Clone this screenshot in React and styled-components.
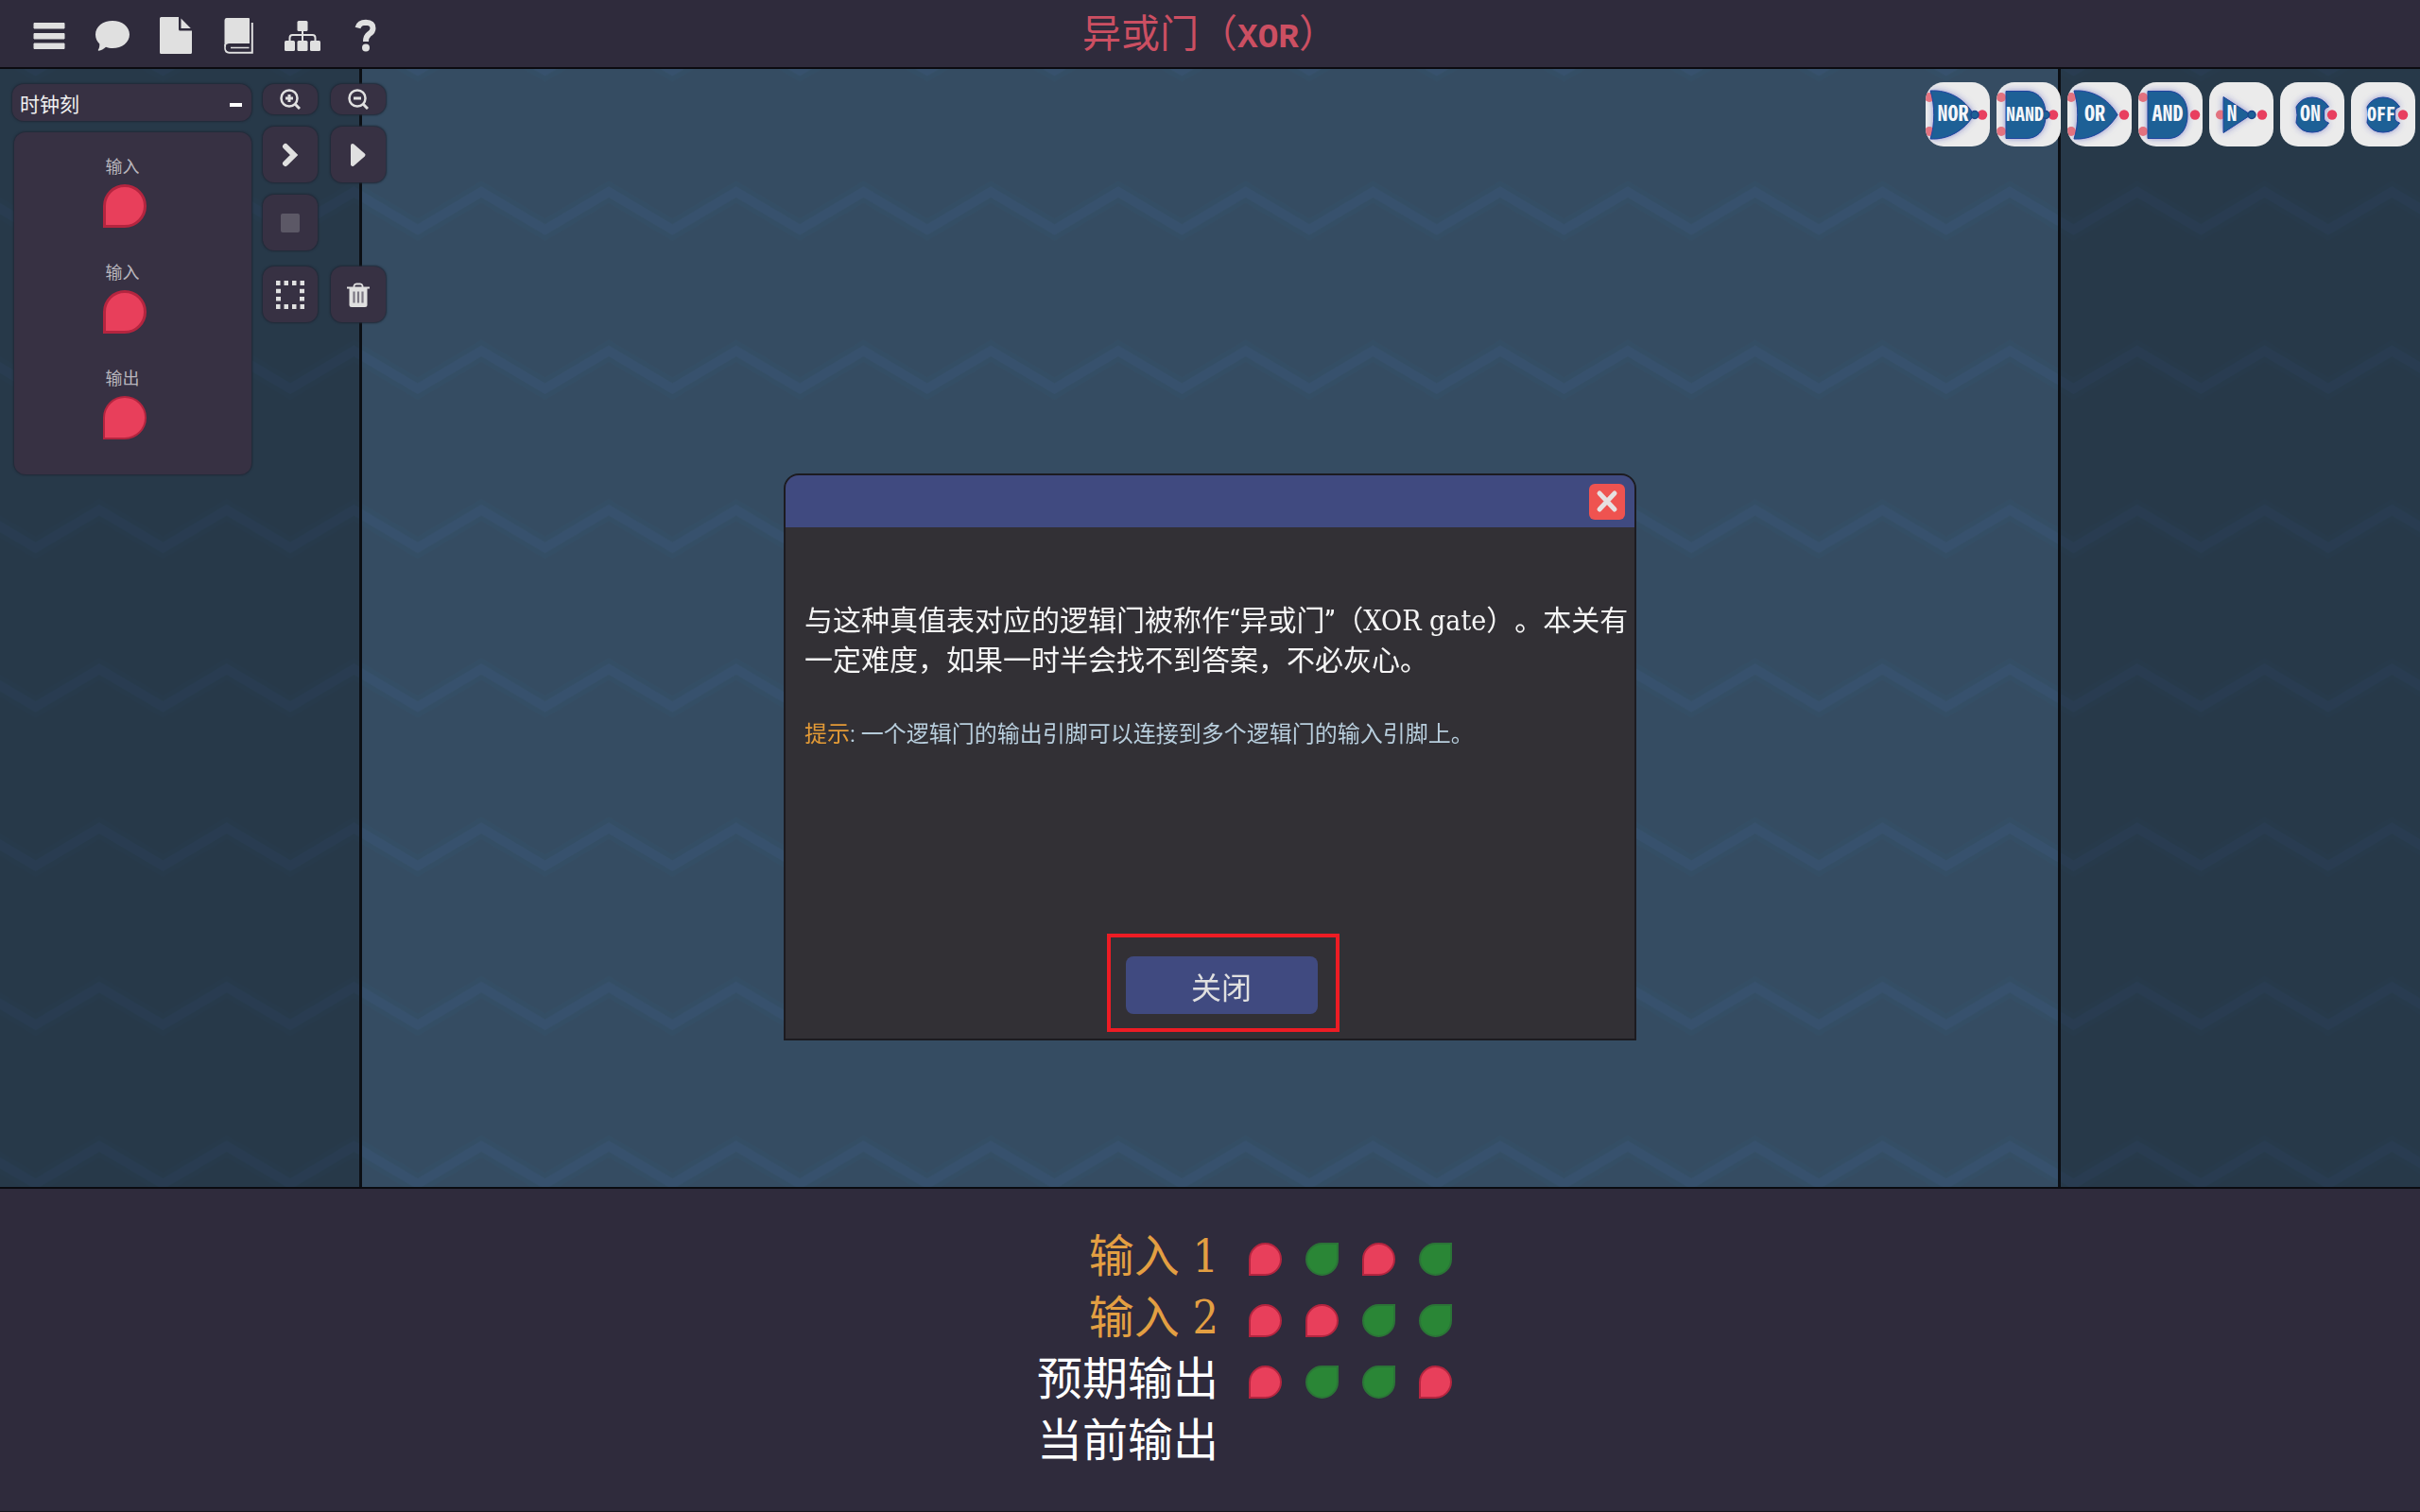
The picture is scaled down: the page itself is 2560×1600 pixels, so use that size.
import React, { useState } from 'react';
import styled, { createGlobalStyle } from 'styled-components';

const serif = `'Roboto Slab', 'DejaVu Serif Condensed', 'Noto Sans CJK SC', sans-serif`;
const sans = `'Noto Sans CJK SC', sans-serif`;

const GlobalStyle = createGlobalStyle`
  * {
    box-sizing: border-box;
  }
  body {
    margin: 0;
    background: #2f2b3c;
    font-family: ${sans};
    text-spacing-trim: space-all;
  }
  button {
    font-family: inherit;
    border: 0;
    padding: 0;
    cursor: pointer;
  }
`;

const Page = styled.div`
  display: flex;
  flex-direction: column;
  min-height: 100vh;
  border-bottom: 1px solid #17151e;
`;

const Header = styled.header`
  display: grid;
  grid-template-columns: 1fr auto 1fr;
  align-items: center;
  height: 73px;
  border-bottom: 2px solid #0b0b10;
`;

const Menu = styled.nav`
  display: flex;
  padding-left: 18px;
`;

const MenuButton = styled.button`
  display: flex;
  align-items: center;
  justify-content: center;
  width: 67px;
  height: 71px;
  padding-top: 2px;
  background: none;
  color: #e0e0e0;
`;

const Title = styled.h1`
  margin: 0;
  font-size: 41px;
  line-height: 64px;
  font-weight: 400;
  color: #cc4f62;
`;

const TitleCode = styled.b`
  font-family: 'Liberation Mono', monospace;
  font-size: 36px;
`;

const Board = styled.main`
  position: relative;
  display: flex;
  flex: 1;
  align-items: flex-start;
  justify-content: space-between;
  padding: 14px 5px 0 13px;
  background: #354c62;
`;

const Backdrop = styled.div`
  position: absolute;
  inset: 0;
  display: grid;
  grid-template-columns: 383px 1fr 383px;
  overflow: hidden;

  svg {
    position: absolute;
    inset: 0;
  }
`;

const Lane = styled.div`
  position: relative;
  background: ${p => (p.$shade ? 'rgba(0, 0, 0, 0.25)' : 'none')};
  border: 0 solid #0c0f14;
  border-left-width: ${p => (p.$edge === 'left' ? '3px' : '0')};
  border-right-width: ${p => (p.$edge === 'right' ? '3px' : '0')};
`;

const Tools = styled.div`
  position: relative;
  display: flex;
  align-items: flex-start;
  gap: 12px;
  padding-top: 2px;
`;

const PinColumn = styled.section`
  display: flex;
  flex-direction: column;
  gap: 12px;
  width: 253px;
`;

const box = `
  background: #373143;
  border-radius: 12px;
  box-shadow: 0 0 2px 1px #202836;
`;

const FoldButton = styled.button`
  ${box}
  display: flex;
  align-items: center;
  justify-content: space-between;
  height: 39px;
  padding: 0 10px 0 8px;
  font-size: 21px;
  color: #f0f0f0;

  &::after {
    content: '';
    width: 13px;
    height: 4px;
    margin-top: 4px;
    background: #fff;
  }
`;

const PinList = styled.ul`
  ${box}
  display: flex;
  flex-direction: column;
  align-items: center;
  gap: 32px;
  height: 362px;
  margin: 0 0 0 2px;
  padding: 21px 0 0;
  list-style: none;
`;

const PinItem = styled.li`
  display: flex;
  flex-direction: column;
  align-items: center;
  gap: 6px;
  width: 252px;
  padding-right: 22px;
  font-size: 18px;
  line-height: 28px;
  color: #b9b6bd;
`;

const Pin = styled.span`
  display: block;
  width: ${p => (p.$large ? '46px' : '35px')};
  height: ${p => (p.$large ? '46px' : '35px')};
  margin-left: ${p => (p.$large ? '4px' : '0')};
  background: ${p => (p.$on ? '#2a8636' : '#e83f5b')};
  border: ${p => (p.$outlined ? '3px' : '2px')} solid
    ${p => (p.$on ? '#2b7437' : '#b4253f')};
  border-radius: ${p => (p.$on ? '50% 0 50% 50%' : '50% 50% 50% 0')};
`;

const ToolGrid = styled.div`
  display: grid;
  grid-template-columns: 58px 58px;
  gap: 13px 14px;
`;

const ToolButton = styled.button`
  ${box}
  display: flex;
  align-items: center;
  justify-content: center;
  width: 58px;
  height: ${p => (p.$slim ? '32px' : '59px')};
  color: #e0e0e0;
`;

const EditRow = styled.div`
  display: grid;
  grid-column: 1 / -1;
  grid-template-columns: subgrid;
  padding-top: 4px;
`;

const GateBar = styled.div`
  position: relative;
  display: flex;
  gap: 7px;
`;

const GateButton = styled.button`
  width: 68px;
  height: 68px;
  background: #ebebeb;
  border-radius: 19px;
  overflow: hidden;

  svg {
    display: block;
  }
`;

const GateText = styled.text`
  font-family: 'Noto Sans Mono CJK SC', 'Liberation Sans Narrow', sans-serif;
  font-weight: 700;
  fill: #f4f6fa;
  text-anchor: middle;
`;

const Dialog = styled.section`
  position: fixed;
  top: 50%;
  left: 50%;
  transform: translate(-50%, -50%);
  display: flex;
  flex-direction: column;
  width: 902px;
  height: 600px;
  margin-top: 1px;
  background: #323035;
  border: 2px solid #1c1b20;
  border-radius: 16px 16px 0 0;
  overflow: hidden;
`;

const DialogHeader = styled.header`
  display: flex;
  align-items: center;
  justify-content: flex-end;
  height: 55px;
  padding-right: 10px;
  background: #404a80;
`;

const CloseIcon = styled.button`
  display: flex;
  align-items: center;
  justify-content: center;
  width: 38px;
  height: 38px;
  background: #ef5350;
  border-radius: 6px;
`;

const DialogBody = styled.div`
  flex: 1;
  padding: 78px 0 0 20px;
  font-family: Roboto, ${sans};
  white-space: nowrap;
`;

const Lead = styled.p`
  margin: 0;
  font-size: 30px;
  line-height: 42px;
  color: #f5f5f5;
`;

const Term = styled.span`
  font-family: ${serif};
`;

const Hint = styled.p`
  margin: 36px 0 0;
  font-size: 24px;
  line-height: 42px;
  color: #b8cedd;

  strong {
    font-weight: 400;
    color: #e39a36;
  }
`;

const Actions = styled.div`
  display: flex;
  justify-content: center;
  padding: 0 0 26px 24px;
`;

const Marked = styled.div`
  position: relative;

  &::after {
    content: '';
    position: absolute;
    inset: -24px -23px -19px -20px;
    border: 4px solid #ed1c24;
    pointer-events: none;
  }
`;

const CloseButton = styled.button`
  display: block;
  width: 203px;
  height: 61px;
  background: #404a80;
  border-radius: 8px;
  font-size: 32px;
  color: #e0e0e0;
`;

const Footer = styled.footer`
  display: flex;
  justify-content: center;
  height: 343px;
  padding-top: 38px;
  border-top: 2px solid #0b0b10;
`;

const TruthTable = styled.table`
  height: 260px;
  margin-left: 86px;
  border-collapse: collapse;
`;

const RowLabel = styled.th`
  height: 65px;
  padding: 0 20px 0 0;
  text-align: right;
  font-family: ${serif};
  font-size: 48px;
  line-height: 64px;
  font-weight: 400;
  color: ${p => (p.$input ? '#e39f42' : '#fff')};
`;

const Bit = styled.td`
  width: 60px;
  height: 65px;
  padding: 8px 12px 0;
`;

const Zigzag = () => (
  <svg width="100%" height="100%">
    <defs>
      <pattern id="zigzag" x="105" y="110" width="134.74" height="168.3" patternUnits="userSpaceOnUse">
        <path d="M-67.37 40 L0 0 L67.37 40 L134.74 0 L202.1 40" transform="translate(0 20)" fill="none" stroke="#344e65" strokeWidth="20" />
        <path d="M-67.37 40 L0 0 L67.37 40 L134.74 0 L202.1 40" transform="translate(0 20)" fill="none" stroke="#37516d" strokeWidth="10" />
      </pattern>
    </defs>
    <rect width="100%" height="100%" fill="url(#zigzag)" />
  </svg>
);

const menu = [
  {
    name: '菜单',
    w: 34,
    h: 30,
    art: <path d="M1 1.5h32v5.500h-32zM1 12.500h32v5.500h-32zM1 23h32v5.500h-32z" fill="currentColor" stroke="currentColor" strokeLinejoin="round" strokeWidth="1" />,
  },
  {
    name: '消息',
    w: 38,
    h: 34,
    art: <path d="M19 1C29 1 37 7 37 15.500S29 30 19 30c-2.500 0-5-.4-7-1.200C9.500 31 7 32.500 4.500 32.800c-.8 0-1-.8-.4-1.500.8-1 1.300-3 1.200-5.800C2.500 22.800 1 19.500 1 15.500 1 7 9 1 19 1z" fill="currentColor" />,
  },
  {
    name: '文件',
    w: 34,
    h: 39,
    art: <path d="M1.500 0H20v13q0 1.500 1.500 1.500H34v23q0 1.500-1.500 1.500h-31Q0 39 0 37.500v-36Q0 0 1.500 0zM22.500 1.500L32.800 12H22.500z" fill="currentColor" />,
  },
  {
    name: '手册',
    w: 32,
    h: 38,
    art: (
      <>
        <path d="M2.500 0H26q1 0 1 1v26H6q-3.500 0-5.500 2.500V2.500Q.5 0 2.500 0z" fill="currentColor" />
        <path d="M29.800 5v31.800H5.500Q1.200 36.500 1.200 32V28" fill="none" stroke="currentColor" strokeWidth="2" />
        <path d="M26.500 34.500H6q-3.500-.3-3.500-3 .3-3.500 4-3.500" fill="none" stroke="#2f2b3c" strokeWidth="1.500" />
        <path d="M7 31.500h19.500" fill="none" stroke="currentColor" strokeWidth="1.500" />
      </>
    ),
  },
  {
    name: '结构图',
    w: 38,
    h: 34,
    art: (
      <>
        <path d="M19 10v13M5.500 23v-4q0-3 3-3h21q3 0 3 3v4" fill="none" stroke="currentColor" strokeWidth="2" />
        <g fill="currentColor">
          <rect x="13.500" y="1" width="11" height="11" rx="1.500" />
          <rect x="0" y="22" width="11" height="11" rx="1.500" />
          <rect x="13.500" y="22" width="11" height="11" rx="1.500" />
          <rect x="27" y="22" width="11" height="11" rx="1.500" />
        </g>
      </>
    ),
  },
  {
    name: '帮助',
    w: 24,
    h: 38,
    art: (
      <>
        <path d="M3.500 10.500Q5 4.800 12 4.800 19.500 5 19.500 11 19.500 14.500 15.500 17 12 19.500 12 25" fill="none" stroke="currentColor" strokeWidth="6" />
        <circle cx="12" cy="31.500" r="4" fill="currentColor" />
      </>
    ),
  },
];

const ZoomIcon = ({ plus }) => (
  <svg width="22" height="22" viewBox="0 0 22 22" fill="none" stroke="currentColor">
    <circle cx="10" cy="10" r="8.500" strokeWidth="2.500" />
    <path d="M16 16l5 5" strokeWidth="3" />
    <path d={plus ? 'M6 10h8M10 6v8' : 'M6 10h8'} strokeWidth="3" />
  </svg>
);

const StepIcon = () => (
  <svg width="18" height="26" viewBox="0 0 18 26" fill="none" stroke="currentColor">
    <path d="M4 4l9 9-9 9" strokeWidth="6" strokeLinecap="round" />
  </svg>
);

const PlayIcon = () => (
  <svg width="18" height="26" viewBox="0 0 18 26">
    <path d="M3 3L14.500 13 3 23z" fill="currentColor" stroke="currentColor" strokeWidth="4" strokeLinejoin="round" />
  </svg>
);

const StopIcon = () => (
  <svg width="20" height="20">
    <rect width="20" height="20" rx="2" fill="#5c5866" />
  </svg>
);

const SelectIcon = () => (
  <svg width="32" height="32" viewBox="0 0 32 32" fill="none" stroke="currentColor" strokeWidth="5">
    <path d="M1 3.500h30M1 28.500h30" strokeDasharray="4.500 4" />
    <path d="M3.500 9.800v14.400M28.500 9.800v14.400" strokeDasharray="4.500 3.600" />
  </svg>
);

const TrashIcon = () => (
  <svg width="24" height="26" viewBox="0 0 24 26" fill="none" stroke="currentColor">
    <path d="M7.500 5V3.500Q8 1.500 10 1.500h4q2 0 2.500 2V5" strokeWidth="1.800" />
    <path d="M0 5.500h24" strokeWidth="2" />
    <path d="M2.500 6h19v17.500q0 2.500-2.500 2.500H5q-2.500 0-2.500-2.500z" fill="currentColor" stroke="none" />
    <path d="M7.500 9.500v12M12 9.500v12M16.500 9.500v12" stroke="#7b7783" strokeWidth="2.200" />
  </svg>
);

const orBody = 'M5 9C24 8 41 17 51 34.500 41 51 24 61 5 60 10 45 10 24 5 9z';
const andBody = 'M10 9.500H31C45 9.500 52 20 52 34.500S45 59.500 31 59.500H10z';
const roundBody = 'M17 26Q23 16 34 16T51.500 26Q47 27 46.500 30V39Q47 42 51.500 43 46 53 34 53T17 43Q19 35 17 26z';

const gates = [
  { label: 'NOR', body: orBody, inputs: [[4, 16], [4, 52]], bubble: 52, out: 60, textX: 29, size: 22 },
  { label: 'NAND', body: andBody, inputs: [[5, 16], [5, 52]], bubble: 52, out: 60, textX: 30, size: 20 },
  { label: 'OR', body: orBody, shift: 2, inputs: [[4, 16], [4, 52]], out: 60, textX: 29, size: 22 },
  { label: 'AND', body: andBody, inputs: [[5, 16], [5, 52]], out: 60, textX: 31, size: 22 },
  { label: 'N', body: 'M15 15.500L44 34.500 15 53.500z', inputs: [[12, 34.5]], bubble: 45, out: 56, textX: 24, size: 22 },
  { label: 'ON', body: roundBody, inputs: [], out: 55, textX: 32, size: 22 },
  { label: 'OFF', body: roundBody, inputs: [], out: 55, textX: 32, size: 20 },
];

const Gate = ({ gate }) => (
  <GateButton aria-label={gate.label}>
    <svg width="68" height="68" viewBox="0 0 68 68">
      <defs>
        <filter id="glow" x="-40%" y="-40%" width="180%" height="180%">
          <feDropShadow dx="0" dy="0" stdDeviation="3.500" floodColor="#3038b0" floodOpacity="0.6" />
        </filter>
      </defs>
      <path d={gate.body} transform={`translate(${gate.shift || 0} 0)`} fill="#1d6096" filter="url(#glow)" />
      {gate.inputs.map(([x, y]) => (
        <circle key={y} cx={x} cy={y} r="5" fill="#e2727f" />
      ))}
      <path d={gate.body} transform={`translate(${gate.shift || 0} 0)`} fill="#1d6096" stroke="#2144a0" strokeWidth="1" />
      <circle cx={gate.out} cy="34.500" r="5.200" fill="#e83f5f" />
      {gate.bubble && <circle cx={gate.bubble} cy="34.500" r="4" fill="#1d6096" stroke="#1c468c" strokeWidth="1.500" />}
      <GateText x={gate.textX} y="41" fontSize={gate.size}>{gate.label}</GateText>
    </svg>
  </GateButton>
);

const pins = [
  { label: '输入', outlined: true },
  { label: '输入', outlined: true },
  { label: '输出', outlined: false },
];

const rows = [
  { label: '输入 1', input: true, bits: [0, 1, 0, 1] },
  { label: '输入 2', input: true, bits: [0, 0, 1, 1] },
  { label: '预期输出', bits: [0, 1, 1, 0] },
  { label: '当前输出', bits: [] },
];

const App = () => {
  const [open, setOpen] = useState(true);
  const [unfolded, setUnfolded] = useState(true);

  return (
    <Page>
      <GlobalStyle />
      <Header>
        <Menu>
          {menu.map(item => (
            <MenuButton key={item.name} aria-label={item.name}>
              <svg width={item.w} height={item.h} viewBox={`0 0 ${item.w} ${item.h}`}>{item.art}</svg>
            </MenuButton>
          ))}
        </Menu>
        <Title>异或门（<TitleCode>XOR</TitleCode>）</Title>
      </Header>

      <Board>
        <Backdrop>
          <Zigzag />
          <Lane $shade $edge="right" />
          <Lane />
          <Lane $shade $edge="left" />
        </Backdrop>

        <Tools>
          <PinColumn>
            <FoldButton aria-expanded={unfolded} onClick={() => setUnfolded(!unfolded)}>时钟刻</FoldButton>
            {unfolded && (
              <PinList>
                {pins.map((pin, i) => (
                  <PinItem key={i}>
                    {pin.label}
                    <Pin $large $outlined={pin.outlined} />
                  </PinItem>
                ))}
              </PinList>
            )}
          </PinColumn>
          <ToolGrid>
            <ToolButton $slim aria-label="放大"><ZoomIcon plus /></ToolButton>
            <ToolButton $slim aria-label="缩小"><ZoomIcon /></ToolButton>
            <ToolButton aria-label="单步"><StepIcon /></ToolButton>
            <ToolButton aria-label="运行"><PlayIcon /></ToolButton>
            <ToolButton aria-label="停止" disabled><StopIcon /></ToolButton>
            <EditRow>
              <ToolButton aria-label="框选"><SelectIcon /></ToolButton>
              <ToolButton aria-label="删除"><TrashIcon /></ToolButton>
            </EditRow>
          </ToolGrid>
        </Tools>

        <GateBar>
          {gates.map(gate => <Gate key={gate.label} gate={gate} />)}
        </GateBar>
      </Board>

      <Footer>
        <TruthTable>
          <tbody>
            {rows.map(row => (
              <tr key={row.label}>
                <RowLabel scope="row" $input={row.input}>{row.label}</RowLabel>
                {row.bits.map((bit, i) => (
                  <Bit key={i}><Pin $on={bit === 1} /></Bit>
                ))}
              </tr>
            ))}
          </tbody>
        </TruthTable>
      </Footer>

      {open && (
        <Dialog role="dialog" aria-label="异或门">
          <DialogHeader>
            <CloseIcon aria-label="关闭" onClick={() => setOpen(false)}>
              <svg width="26" height="26" viewBox="0 0 26 26">
                <path d="M5 4l16 17M21 4L5 21" stroke="#e6e0e0" strokeWidth="5" strokeLinecap="round" />
              </svg>
            </CloseIcon>
          </DialogHeader>
          <DialogBody>
            <Lead>
              与这种真值表对应的逻辑门被称作“异或门”（<Term>XOR gate</Term>）。本关有<br />
              一定难度，如果一时半会找不到答案，不必灰心。
            </Lead>
            <Hint>
              <strong>提示</strong>: 一个逻辑门的输出引脚可以连接到多个逻辑门的输入引脚上。
            </Hint>
          </DialogBody>
          <Actions>
            <Marked>
              <CloseButton onClick={() => setOpen(false)}>关闭</CloseButton>
            </Marked>
          </Actions>
        </Dialog>
      )}
    </Page>
  );
};

export default App;
